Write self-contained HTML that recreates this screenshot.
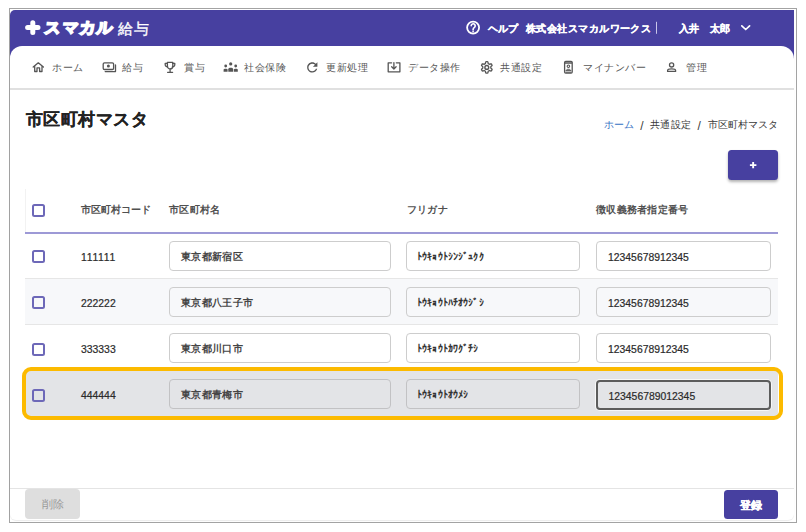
<!DOCTYPE html>
<html><head><meta charset="utf-8">
<style>
*{box-sizing:border-box;margin:0;padding:0}
html,body{width:806px;height:532px;background:#fff;overflow:hidden;font-family:"Liberation Sans",sans-serif}
.frame{position:absolute;left:9px;top:8px;width:788px;height:515px;border:1px solid #a3a3a3}
.app{position:absolute;left:10px;top:10px;width:784px;height:510px;background:#fff;border-radius:5px 5px 6px 6px;box-shadow:0 1px 1px rgba(0,0,0,.08)}
.hdr{position:absolute;left:10px;top:10px;width:784px;height:50px;background:#4740a0;border-radius:5px 0 0 0}
.nav{position:absolute;left:10px;top:46px;width:784px;height:44px;background:#fff;border-radius:12px 13px 0 0;border-bottom:2px solid #e0e0e0}
.t{position:absolute;white-space:nowrap;line-height:1}
.w{color:#fff}
.hd{font-size:10px;font-weight:bold;letter-spacing:.45px;-webkit-text-stroke:.25px #fff;margin-top:1.5px}
.navi{color:#585858;font-size:10px;letter-spacing:.5px}
.title{font-size:17px;font-weight:bold;color:#222;letter-spacing:.45px}
.bc{font-size:10px;color:#3a3a3a}
.btn{position:absolute;background:#4740a0;border-radius:3.5px}
.th{font-size:10px;font-weight:bold;color:#505050;letter-spacing:.2px}
.row{position:absolute;left:25px;width:753px;height:46px;border-bottom:1px solid #e6e6e6}
.cb{position:absolute;left:32px;width:13px;height:13px;border:2px solid #6d68b8;border-radius:2.5px}
.code{font-size:10.4px;font-weight:normal;color:#2a2a2a;-webkit-text-stroke:.2px #2a2a2a}
.inp{position:absolute;height:30px;border:1px solid #cdcdcd;border-radius:4px;background:transparent}
.it{font-size:10px;font-weight:bold;color:#454545;letter-spacing:.4px}
.kn{font-size:10px;font-weight:bold;color:#333;letter-spacing:.15px}
.num{font-size:10.4px;font-weight:normal;color:#2a2a2a;-webkit-text-stroke:.2px #2a2a2a}
</style></head><body>
<div class="frame"></div>
<div class="app"></div>
<div class="hdr"></div>
<div class="nav"></div>
<svg style="position:absolute;left:0;top:0" width="806" height="532" viewBox="0 0 806 532">
<g fill="none" stroke="#555" stroke-width="1.3" stroke-linejoin="round" stroke-linecap="round">
<path d="M33.2 67.1L38.3 62.8L43.4 67.1M34.7 65.9V71.5H37V67.9H39.6V71.5H42V65.9"/>
<rect x="103.2" y="62.8" width="10.4" height="6.7" rx="1.3"/>
<path d="M105.2 71.6H115.5V64.9"/>
<path d="M167.4 62.4H172.8V66.2A2.7 2.7 0 0 1 167.4 66.2Z"/>
<path d="M167.4 63.4H165.2V64.6A2.3 2.3 0 0 0 167.6 66.9M172.6 63.4H174.8V64.6A2.3 2.3 0 0 1 172.4 66.9"/>
<path d="M170.1 69V72.2M167.6 72.3H172.6"/>

<path d="M391.6 62.8H388.2V71.8H399.9V62.8H396.3M393.9 62.6V69M391.7 66.8L393.9 69.1L396.1 66.8"/>
<path d="M486.8 61.7L487.3 61.7L487.8 61.9L488.1 62.7L488.2 63.6L488.5 63.8L488.8 63.9L489.1 64.1L489.4 64.3L490.2 64.0L491.1 63.8L491.5 64.1L491.7 64.6L492.0 65.0L492.1 65.5L491.5 66.1L490.8 66.7L490.8 67.1L490.8 67.4L490.8 67.7L490.8 68.1L491.5 68.7L492.1 69.3L492.0 69.8L491.7 70.2L491.5 70.7L491.1 71.0L490.2 70.8L489.4 70.5L489.1 70.7L488.8 70.9L488.5 71.0L488.2 71.2L488.1 72.1L487.8 72.9L487.3 73.1L486.8 73.1L486.3 73.1L485.8 72.9L485.5 72.1L485.4 71.2L485.1 71.0L484.8 70.9L484.5 70.7L484.2 70.5L483.4 70.8L482.5 71.0L482.1 70.7L481.9 70.2L481.6 69.8L481.5 69.3L482.1 68.7L482.8 68.1L482.8 67.7L482.8 67.4L482.8 67.1L482.8 66.7L482.1 66.1L481.5 65.5L481.6 65.0L481.9 64.6L482.1 64.1L482.5 63.8L483.4 64.0L484.2 64.3L484.5 64.1L484.8 63.9L485.1 63.8L485.4 63.6L485.5 62.7L485.8 61.9L486.3 61.7Z"/>
<circle cx="486.8" cy="67.4" r="1.9" stroke-width="1.4"/>
<rect x="564.6" y="61.4" width="7.6" height="11.7" rx="1.1"/>
<path d="M565.2 62.9H571.6" stroke-width="1.5"/><path d="M566 70.6H570.8M566 72.2H570.8" stroke-width="1"/><circle cx="568.4" cy="66.3" r="1.25" stroke-width="1.1"/>
<circle cx="671.6" cy="64.9" r="2.1"/>
<path d="M667.6 71.4V70.6C667.6 68.4 675.6 68.4 675.6 70.6V71.4Z"/>
</g>
<g fill="#555">
<circle cx="108.4" cy="66.1" r="1.5"/>
<path transform="translate(304.6 59.8) scale(.64)" d="M17.65 6.35C16.2 4.9 14.21 4 12 4c-4.42 0-7.99 3.58-7.99 8s3.57 8 7.99 8c3.73 0 6.84-2.55 7.73-6h-2.08c-.82 2.330-3.04 4-5.65 4-3.31 0-6-2.690-6-6s2.69-6 6-6c1.66 0 3.14.69 4.22 1.78L13 11h7V4l-2.35 2.35z"/>
<circle cx="230.7" cy="63.9" r="1.6"/>
<circle cx="225.7" cy="66" r="1.4"/>
<circle cx="235.7" cy="66" r="1.4"/>
<path d="M228.3 71.8V69.2C228.3 67.4 233.1 67.4 233.1 69.2V71.8Z"/>
<path d="M223.6 71.8V69.8C223.6 68.4 227.6 68.4 227.6 69.8V71.8Z"/>
<path d="M233.8 71.8V69.8C233.8 68.4 237.8 68.4 237.8 69.8V71.8Z"/>
<path d="M566.2 69.7C566.6 68.3 570.2 68.3 570.6 69.7Z"/>
</g>
<g fill="none" stroke="#fff" stroke-linecap="round" stroke-linejoin="round">
<circle cx="473.1" cy="27.6" r="6" stroke-width="1.8"/>
<path d="M471.2 25.8A2 2 0 1 1 474.4 27.4C473.5 28 473.1 28.4 473.1 29.4V30" stroke-width="1.6"/>
<path d="M741.8 25.8L745.7 29.5L749.6 25.8" stroke-width="1.7"/>
<path d="M656.5 22.2V33.4" stroke="#c9c6ea" stroke-width="1"/>
<path d="M27.6 27.6H38M32.8 22.7V32.6" stroke-width="5"/>
</g>
<circle cx="473.1" cy="31.6" r=".85" fill="#fff"/>
</svg>
<!-- header content -->
<div class="t w" style="left:45px;top:20px;font-size:16px;font-weight:bold;-webkit-text-stroke:1.7px #fff;transform:skewX(-6deg);letter-spacing:1.3px">スマカル</div>
<div class="t w" style="left:118px;top:20.5px;font-size:15px;-webkit-text-stroke:.35px #fff;letter-spacing:.8px">給与</div>
<div class="t w hd" style="left:488px;top:22px;letter-spacing:0">ヘルプ</div>
<div class="t w hd" style="left:526px;top:22px">株式会社スマカルワークス</div>
<div class="t w hd" style="left:679px;top:22px">入井</div>
<div class="t w hd" style="left:710px;top:22px">太郎</div>

<!-- nav -->
<div class="t navi" style="left:52px;top:62.6px">ホーム</div>
<div class="t navi" style="left:122px;top:62.6px">給与</div>
<div class="t navi" style="left:184px;top:62.6px">賞与</div>
<div class="t navi" style="left:244px;top:62.6px">社会保険</div>
<div class="t navi" style="left:326px;top:62.6px">更新処理</div>
<div class="t navi" style="left:408px;top:62.6px">データ操作</div>
<div class="t navi" style="left:500px;top:62.6px">共通設定</div>
<div class="t navi" style="left:583px;top:62.6px">マイナンバー</div>
<div class="t navi" style="left:686px;top:62.6px">管理</div>

<!-- title -->
<div class="t title" style="left:26px;top:111px;-webkit-text-stroke:.2px #222">市区町村マスタ</div>
<div class="t bc" style="left:603.8px;top:120px;color:#3572c4">ホーム</div>
<div class="t bc" style="left:640.3px;top:119.5px;font-size:12px">/</div>
<div class="t bc" style="left:649.8px;top:120px;letter-spacing:.4px">共通設定</div>
<div class="t bc" style="left:697.5px;top:119.5px;font-size:12px">/</div>
<div class="t bc" style="left:708px;top:120px">市区町村マスタ</div>

<div class="btn" style="left:728px;top:150px;width:50px;height:30px;box-shadow:0 2px 3px rgba(0,0,0,.3)"></div>
<svg style="position:absolute;left:0;top:0" width="806" height="532"><path d="M749.9 165.1H756.4M753.15 161.9V168.3" stroke="#fff" stroke-width="1.9"/></svg>

<!-- table header -->
<div style="position:absolute;left:25px;top:189px;width:1px;height:43px;background:#f2f2f2"></div>
<div style="position:absolute;left:25px;top:232px;width:753px;height:2px;background:#9d99d6"></div>
<div class="cb" style="top:204px"></div>
<div class="t th" style="left:81px;top:205px;letter-spacing:0">市区町村コード</div>
<div class="t th" style="left:169px;top:205px;letter-spacing:.3px">市区町村名</div>
<div class="t th" style="left:407px;top:205px">フリガナ</div>
<div class="t th" style="left:596px;top:205px;letter-spacing:.25px">徴収義務者指定番号</div>

<!-- rows -->
<div class="row" style="top:234px;height:45px;background:#fff"></div>
<div class="row" style="top:279px;background:#f7f8fa"></div>
<div class="row" style="top:325px;background:#fff"></div>
<div class="row" style="top:371px;background:#e3e4e7;border-bottom:none"></div>

<div class="cb" style="top:250px"></div>
<div class="cb" style="top:296px"></div>
<div class="cb" style="top:343px"></div>
<div class="cb" style="top:389px"></div>

<div class="t code" style="left:81px;top:253px;letter-spacing:.7px">111111</div>
<div class="t code" style="left:81px;top:299px">222222</div>
<div class="t code" style="left:81px;top:345px">333333</div>
<div class="t code" style="left:81px;top:391px">444444</div>

<div class="inp" style="left:169px;top:241px;width:222px"></div>
<div class="inp" style="left:406px;top:241px;width:174px"></div>
<div class="inp" style="left:596px;top:241px;width:175px"></div>
<div class="inp" style="left:169px;top:287px;width:222px"></div>
<div class="inp" style="left:406px;top:287px;width:174px"></div>
<div class="inp" style="left:596px;top:287px;width:175px"></div>
<div class="inp" style="left:169px;top:333px;width:222px"></div>
<div class="inp" style="left:406px;top:333px;width:174px"></div>
<div class="inp" style="left:596px;top:333px;width:175px"></div>
<div class="inp" style="left:169px;top:379px;width:222px;border:1.5px solid #c2c2c4"></div>
<div class="inp" style="left:406px;top:379px;width:174px;border:1.5px solid #c2c2c4"></div>
<div class="inp" style="left:596px;top:379.5px;width:175px;height:30px;background:#e3e4e7;border:2px solid #5c5c5c;box-shadow:0 0 0 1px rgba(255,255,255,.7)"></div>

<div class="t it" style="left:180.8px;top:252px">東京都新宿区</div>
<div class="t kn" style="left:417px;top:252px">ﾄｳｷｮｳﾄｼﾝｼﾞｭｸｸ</div>
<div class="t num" style="left:608px;top:253px">12345678912345</div>
<div class="t it" style="left:180.8px;top:298px">東京都八王子市</div>
<div class="t kn" style="left:417px;top:298px">ﾄｳｷｮｳﾄﾊﾁｵｳｼﾞｼ</div>
<div class="t num" style="left:608px;top:299px">12345678912345</div>
<div class="t it" style="left:180.8px;top:344px">東京都川口市</div>
<div class="t kn" style="left:417px;top:344px">ﾄｳｷｮｳﾄｶﾜｸﾞﾁｼ</div>
<div class="t num" style="left:608px;top:345px">12345678912345</div>
<div class="t it" style="left:180.8px;top:390px">東京都青梅市</div>
<div class="t kn" style="left:417px;top:390px">ﾄｳｷｮｳﾄｵｳﾒｼ</div>
<div class="t num" style="left:608.5px;top:392px">123456789012345</div>

<!-- highlight -->
<div style="position:absolute;left:22px;top:367px;width:761px;height:53px;border:4px solid #fcba00;border-radius:9px"></div>

<!-- footer -->
<div style="position:absolute;left:10px;top:488px;width:784px;height:1px;background:#e4e4e4"></div>
<div style="position:absolute;left:25px;top:489px;width:54.5px;height:30px;background:#dedede;border-radius:4px"></div>
<div class="t" style="left:41.5px;top:499px;font-size:11px;color:#999">削除</div>
<div class="btn" style="left:724px;top:489.5px;width:54px;height:29.5px"></div>
<div class="t w" style="left:740px;top:499.5px;font-size:11px;font-weight:bold;-webkit-text-stroke:.3px #fff">登録</div>
</body></html>
